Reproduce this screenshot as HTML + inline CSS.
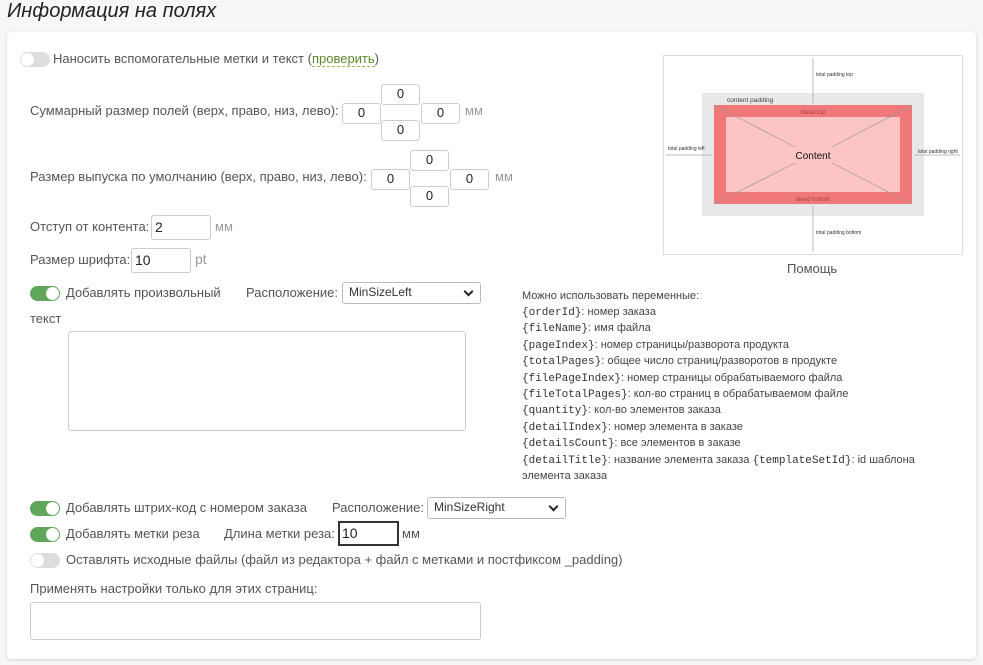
<!DOCTYPE html>
<html><head><meta charset="utf-8"><style>
body{margin:0;width:983px;height:665px;background:#f7f7f7;font-family:"Liberation Sans",sans-serif;font-size:13px;color:#555;position:relative;overflow:hidden}
.a{position:absolute;white-space:nowrap}
.card{position:absolute;left:7px;top:32px;width:969px;height:627px;background:#fff;border-radius:4px;box-shadow:0 1px 3px rgba(0,0,0,.15)}
.in{position:absolute;border:1px solid #ccc;border-radius:3px;background:#fff;box-sizing:border-box;font-size:13px;color:#222;text-align:center;line-height:18px}
.tg{position:absolute;width:30px;height:15px;border-radius:8px;background:#ddd}
.tg::after{content:"";position:absolute;left:1px;top:1px;width:13px;height:13px;border-radius:50%;background:#fff}
.tg.on{background:#5fa55a}.tg.on::after{left:16px}
.sel{position:absolute;border:1px solid #bbb;border-radius:3px;box-sizing:border-box;background:#fff;font-size:12px;color:#333;padding-left:6px;line-height:19px}
.sel::after{content:"";position:absolute;right:8px;top:5px;width:5px;height:5px;border-right:2px solid #222;border-bottom:2px solid #222;transform:rotate(45deg)}
.h{position:absolute;left:522px;font-size:11px;color:#444;white-space:nowrap}
.h code{font-family:"Liberation Mono",monospace;font-size:11px;color:#333}
</style></head><body>
<div class="a" style="left:7px;top:0;font-size:20px;font-style:italic;color:#222">Информация на полях</div>
<div class="card"></div>
<div class="tg" style="left:20px;top:52px"></div>
<div class="a" style="left:53px;top:51px">Наносить вспомогательные метки и текст (<span style="color:#5a8a2a;border-bottom:1px dashed #9b5">проверить</span>)</div>

<div class="a" style="left:30px;top:103px">Суммарный размер полей (верх, право, низ, лево):</div>
<div class="in" style="left:342px;top:103px;width:39px;height:21px">0</div>
<div class="in" style="left:381px;top:84px;width:39px;height:21px">0</div>
<div class="in" style="left:381px;top:120px;width:39px;height:21px">0</div>
<div class="in" style="left:421px;top:103px;width:39px;height:21px">0</div>
<div class="a" style="left:465px;top:103px;color:#999">мм</div>

<div class="a" style="left:30px;top:169px">Размер выпуска по умолчанию (верх, право, низ, лево):</div>
<div class="in" style="left:371px;top:169px;width:39px;height:21px">0</div>
<div class="in" style="left:410px;top:150px;width:39px;height:21px">0</div>
<div class="in" style="left:410px;top:186px;width:39px;height:21px">0</div>
<div class="in" style="left:450px;top:169px;width:39px;height:21px">0</div>
<div class="a" style="left:495px;top:169px;color:#999">мм</div>

<div class="a" style="left:30px;top:219px">Отступ от контента:</div>
<div class="in" style="left:151px;top:215px;width:60px;height:25px;text-align:left;padding-left:3px;line-height:23px;font-size:14px">2</div>
<div class="a" style="left:215px;top:219px;color:#999">мм</div>
<div class="a" style="left:30px;top:252px">Размер шрифта:</div>
<div class="in" style="left:131px;top:248px;width:60px;height:25px;text-align:left;padding-left:3px;line-height:23px;font-size:14px">10</div>
<div class="a" style="left:195px;top:251px;color:#999;font-size:14px">pt</div>

<div class="tg on" style="left:30px;top:286px"></div>
<div class="a" style="left:66px;top:285px">Добавлять произвольный</div>
<div class="a" style="left:246px;top:285px">Расположение:</div>
<div class="sel" style="left:342px;top:282px;width:139px;height:22px">MinSizeLeft</div>
<div class="a" style="left:30px;top:311px">текст</div>
<div class="in" style="left:68px;top:331px;width:398px;height:100px"></div>

<div class="h" style="top:290px">Можно использовать переменные:</div>
<div class="h" style="top:306px"><code>{orderId}</code>: номер заказа</div>
<div class="h" style="top:322px"><code>{fileName}</code>: имя файла</div>
<div class="h" style="top:339px"><code>{pageIndex}</code>: номер страницы/разворота продукта</div>
<div class="h" style="top:355px"><code>{totalPages}</code>: общее число страниц/разворотов в продукте</div>
<div class="h" style="top:372px"><code>{filePageIndex}</code>: номер страницы обрабатываемого файла</div>
<div class="h" style="top:388px"><code>{fileTotalPages}</code>: кол-во страниц в обрабатываемом файле</div>
<div class="h" style="top:404px"><code>{quantity}</code>: кол-во элементов заказа</div>
<div class="h" style="top:421px"><code>{detailIndex}</code>: номер элемента в заказе</div>
<div class="h" style="top:437px"><code>{detailsCount}</code>: все элементов в заказе</div>
<div class="h" style="top:454px"><code>{detailTitle}</code>: название элемента заказа <code>{templateSetId}</code>: id шаблона</div>
<div class="h" style="top:470px">элемента заказа</div>

<svg class="a" style="left:663px;top:55px" width="300" height="200" viewBox="663 55 300 200">
<rect x="663.5" y="55.5" width="299" height="199" fill="#fff" stroke="#ddd"/>
<rect x="702" y="93" width="222" height="123" fill="#e8e8e8"/>
<rect x="714" y="105" width="198" height="99" fill="#f07878"/>
<rect x="726" y="117" width="174" height="75" fill="#fcc4c4"/>
<g stroke="#999" stroke-width=".7" fill="none"><line x1="714" y1="105" x2="795" y2="147"/><line x1="912" y1="105" x2="832" y2="147"/><line x1="714" y1="204" x2="795" y2="163"/><line x1="912" y1="204" x2="832" y2="163"/></g>
<g stroke="#bbb" stroke-width="1"><line x1="813" y1="58" x2="813" y2="104"/><line x1="813" y1="206" x2="813" y2="252"/><line x1="666" y1="155" x2="712" y2="155"/><line x1="914" y1="155" x2="960" y2="155"/></g>
<g font-family="Liberation Sans" font-size="5" fill="#333"><text x="816" y="76">total padding top</text><text x="816" y="234">total padding bottom</text><text x="668" y="150">total padding left</text><text x="918" y="153">total padding right</text></g>
<text x="727" y="102" font-size="6.5" fill="#444" font-family="Liberation Sans">content padding</text>
<text x="813" y="114" font-size="6" fill="#a44" text-anchor="middle" font-family="Liberation Sans">bleed top</text>
<text x="813" y="201" font-size="6" fill="#a44" text-anchor="middle" font-family="Liberation Sans">bleed bottom</text>
<text x="813" y="159" font-size="10" fill="#111" text-anchor="middle" font-family="Liberation Sans">Content</text>
</svg>
<div class="a" style="left:787px;top:261px;font-size:13px">Помощь</div>

<div class="tg on" style="left:30px;top:501px"></div>
<div class="a" style="left:66px;top:500px">Добавлять штрих-код с номером заказа</div>
<div class="a" style="left:332px;top:500px">Расположение:</div>
<div class="sel" style="left:427px;top:497px;width:139px;height:22px">MinSizeRight</div>
<div class="tg on" style="left:30px;top:527px"></div>
<div class="a" style="left:66px;top:526px">Добавлять метки реза</div>
<div class="a" style="left:224px;top:526px">Длина метки реза:</div>
<div class="in" style="left:338px;top:521px;width:61px;height:25px;border:2px solid #333;border-radius:0;text-align:left;padding-left:2px;line-height:21px;font-size:14px">10</div>
<div class="a" style="left:402px;top:526px">мм</div>
<div class="tg" style="left:30px;top:553px"></div>
<div class="a" style="left:66px;top:552px">Оставлять исходные файлы (файл из редактора + файл с метками и постфиксом _padding)</div>
<div class="a" style="left:30px;top:581px">Применять настройки только для этих страниц:</div>
<div class="in" style="left:30px;top:602px;width:451px;height:38px"></div>
</body></html>
